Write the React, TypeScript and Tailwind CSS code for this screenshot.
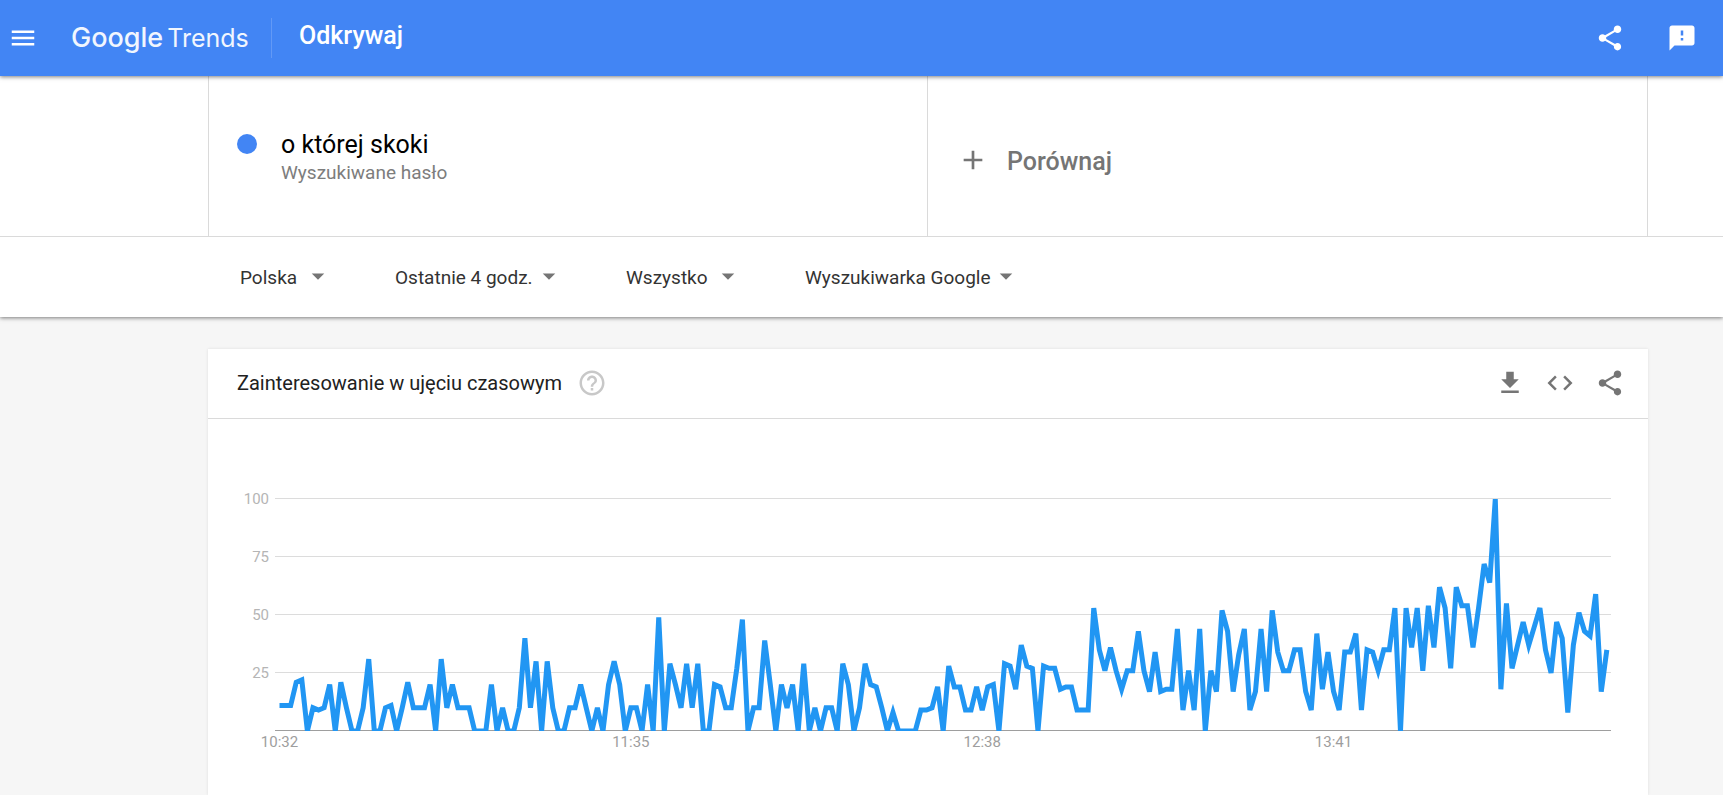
import React from 'react';
import {
  MdAdd,
  MdArrowDropDown,
  MdCode,
  MdFeedback,
  MdFileDownload,
  MdHelpOutline,
  MdMenu,
  MdShare,
} from 'react-icons/md';

interface Filter {
  label: string;
  value: string;
  width: string;
}

const filters: Filter[] = [
  { label: 'Region', value: 'Polska', width: 'w-[63px]' },
  { label: 'Okres', value: 'Ostatnie 4 godz.', width: 'w-[139px]' },
  { label: 'Kategoria', value: 'Wszystko', width: 'w-[87px]' },
  { label: 'Typ wyszukiwania', value: 'Wyszukiwarka Google', width: 'w-[186px]' },
];

// one value per minute, starting at 10:32
const values = [
  11, 11, 11, 21, 22, 0, 10, 9, 10, 20, 0, 21, 10, 0, 0, 10, 31, 0, 0, 10,
  11, 0, 10, 21, 10, 10, 10, 20, 0, 31, 10, 20, 10, 10, 10, 0, 0, 0, 20, 0,
  10, 0, 0, 10, 40, 10, 30, 0, 30, 10, 0, 0, 10, 10, 20, 10, 0, 10, 0, 20,
  30, 20, 0, 10, 10, 0, 20, 0, 49, 0, 29, 20, 10, 29, 10, 29, 0, 0, 20, 19,
  10, 10, 27, 48, 0, 10, 10, 39, 20, 0, 20, 10, 20, 0, 29, 0, 10, 0, 10, 10,
  0, 29, 20, 0, 10, 29, 20, 19, 10, 0, 8, 0, 0, 0, 0, 9, 9, 10, 19, 0,
  28, 19, 19, 9, 9, 19, 9, 19, 20, 0, 29, 28, 18, 37, 28, 27, 0, 28, 27, 27,
  18, 19, 19, 9, 9, 9, 53, 35, 26, 36, 26, 18, 26, 26, 43, 26, 17, 34, 17, 18,
  18, 44, 9, 26, 9, 44, 0, 26, 17, 52, 43, 17, 33, 44, 9, 17, 44, 17, 52, 34,
  26, 26, 35, 35, 17, 9, 42, 18, 34, 17, 9, 34, 34, 42, 9, 35, 34, 26, 35, 35,
  53, 0, 53, 36, 53, 26, 54, 36, 62, 53, 27, 62, 54, 54, 36, 53, 72, 64, 100, 18,
  55, 27, 37, 47, 37, 45, 53, 35, 25, 47, 40, 8, 37, 51, 43, 41, 59, 17, 35,
];

const timeLabels = [
  { minute: 0, text: '10:32' },
  { minute: 63, text: '11:35' },
  { minute: 126, text: '12:38' },
  { minute: 189, text: '13:41' },
];

const BASE_Y = 312;
const TOP_Y = 80;

const toX = (minute: number) => 71.5 + minute * 5.577;
const toY = (value: number) => BASE_Y - (value * (BASE_Y - TOP_Y)) / 100;

const Header = () => (
  <header className="relative z-20 flex h-[76px] items-center bg-[#4285f4] pl-2 pr-[26px] text-white shadow-[0_1px_4px_rgba(0,0,0,0.5)]">
    <button aria-label="Menu">
      <MdMenu size={30} />
    </button>
    <a href="#" className="ml-[33px] flex w-[178px] items-baseline gap-1 font-['Inter',sans-serif] text-[#f1f6fe]">
      <span className="text-[27px] leading-8 font-medium">Google</span>
      <span className="text-[25px] leading-8">Trends</span>
    </a>
    <div className="ml-[22px] h-10 w-px bg-[#6299f6]" />
    <h1 className="ml-[27px] pb-1 text-[25px] leading-8 font-medium">Odkrywaj</h1>
    <div className="ml-auto flex gap-[42px]">
      <button aria-label="Udostępnij">
        <MdShare size={30} />
      </button>
      <button aria-label="Prześlij opinię">
        <MdFeedback size={30} />
      </button>
    </div>
  </header>
);

const SearchTerms = () => (
  <div className="relative z-10 border-b border-[#dadada] bg-white">
    <div className="ml-[208px] mr-[75px] grid h-40 grid-cols-2 border-x border-[#dadada]">
      <div className="flex items-center border-r border-[#dadada] pl-7">
        <span className="mb-6 size-5 rounded-full bg-[#4285f4]" />
        <div className="ml-6 pt-1.5">
          <div className="text-[25px] leading-7 text-black">o której skoki</div>
          <div className="text-[19px] leading-7 text-[#7d7d7d]">Wyszukiwane hasło</div>
        </div>
      </div>
      <button className="flex items-center gap-[18px] pt-2 pl-[29px] text-[#757575]">
        <MdAdd size={32} />
        <span className="pt-1 text-[25px] leading-8 font-medium">Porównaj</span>
      </button>
    </div>
  </div>
);

const Filters = () => (
  <div className="relative flex h-20 items-center gap-[62px] bg-white pl-60 shadow-[0_1px_4px_rgba(0,0,0,0.5)]">
    {filters.map((filter) => (
      <label key={filter.value} className="flex items-center text-[#757575]">
        <select
          aria-label={filter.label}
          className={`${filter.width} appearance-none bg-transparent pt-0.5 text-[19px] leading-7 text-[#333]`}
        >
          <option>{filter.value}</option>
        </select>
        <MdArrowDropDown size={30} className="mb-0.5" />
      </label>
    ))}
  </div>
);

const TimelineChart = () => (
  <svg viewBox="0 0 1440 350" className="w-full" role="img" aria-label="Zainteresowanie w ujęciu czasowym">
    <clipPath id="plot">
      <rect x="67" y={TOP_Y} width="1336" height={BASE_Y - TOP_Y} />
    </clipPath>
    {[100, 75, 50, 25].map((level) => (
      <g key={level}>
        <rect x="67" y={Math.round(toY(level)) - 1} width="1336" height="1" fill="#dcdcdc" />
        <text x="61" y={Math.round(toY(level)) + 5} textAnchor="end" fontSize="15" fill="#b5b5b5">
          {level}
        </text>
      </g>
    ))}
    <rect x="67" y={BASE_Y - 1} width="1336" height="1" fill="#9e9e9e" />
    <polyline
      points={values.map((value, i) => `${toX(i)},${toY(value)}`).join(' ')}
      fill="none"
      stroke="#2196f3"
      strokeWidth="5"
      clipPath="url(#plot)"
    />
    {timeLabels.map((label) => (
      <text key={label.text} x={toX(label.minute)} y="328" textAnchor="middle" fontSize="15" fill="#9e9e9e">
        {label.text}
      </text>
    ))}
  </svg>
);

const InterestCard = () => (
  <section className="mt-8 mr-[75px] ml-[208px] grow bg-white shadow-[0_0_3px_rgba(0,0,0,0.1)]">
    <div className="flex h-[70px] items-center border-b border-[#dadada] pr-[23px] pb-0.5 pl-[29px]">
      <h2 className="text-[20px] leading-7 text-[#212121]">Zainteresowanie w ujęciu czasowym</h2>
      <button aria-label="Pomoc" className="ml-[15px] text-[#c8c8c8]">
        <MdHelpOutline size={30} />
      </button>
      <div className="ml-auto flex gap-5 text-[#757575]">
        <button aria-label="Pobierz">
          <MdFileDownload size={30} />
        </button>
        <button aria-label="Umieść">
          <MdCode size={30} />
        </button>
        <button aria-label="Udostępnij wykres">
          <MdShare size={30} />
        </button>
      </div>
    </div>
    <TimelineChart />
  </section>
);

const App: React.FC = () => {
  return (
    <div className="flex min-h-screen flex-col bg-[#f6f6f6] font-['Roboto',sans-serif]">
      <Header />
      <SearchTerms />
      <Filters />
      <InterestCard />
    </div>
  );
};

export default App;
